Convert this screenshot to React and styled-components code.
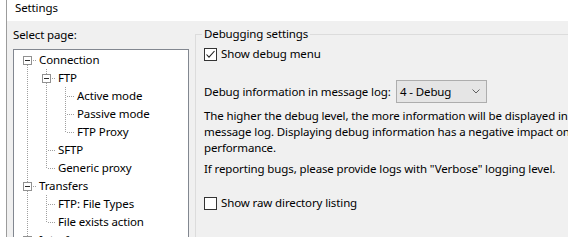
import React from 'react';
import styled, { createGlobalStyle } from 'styled-components';

const Global = createGlobalStyle`
  html, body { margin: 0; padding: 0; background: #ffffff; }
  body {
    font-family: "Noto Sans", "Liberation Sans", sans-serif;
    font-size: 11.5px;
    letter-spacing: -0.12px;
    color: #000000;
    overflow: hidden;
  }
`;

const Desktop = styled.div`
  width: 568px;
  height: 237px;
  box-sizing: border-box;
  padding-left: 6px;
  background: #ffffff;
  overflow: hidden;
`;

const Window = styled.div`
  height: 100%;
  display: flex;
  flex-direction: column;
  border-left: 1px solid #9c9c9c;
  background: #f0f0f0;
  overflow: hidden;
`;

const TitleBar = styled.div`
  flex: none;
  height: 21px;
  box-sizing: border-box;
  padding-left: 8px;
  background: #ffffff;
  line-height: 15px;
  white-space: nowrap;
`;

const Body = styled.div`
  flex: 1;
  min-height: 0;
  display: flex;
  padding-left: 6px;
  overflow: hidden;
`;

const LeftColumn = styled.div`
  flex: none;
  width: 176px;
  display: flex;
  flex-direction: column;
`;

const PageLabel = styled.div`
  padding-top: 6px;
  margin-bottom: 6px;
  line-height: 16px;
`;

const TreeBox = styled.div`
  flex: 1;
  margin-bottom: -30px;
  border: 1px solid #828790;
  background: #ffffff;
  padding: 1px 0 0 4px;
  overflow: hidden;
`;

const TreeRow = styled.div`
  display: flex;
  align-items: center;
  height: 18px;
`;

const TreeText = styled.span`
  margin-left: 2px;
  line-height: 18px;
  white-space: nowrap;
`;

const GroupBox = styled.div`
  position: relative;
  flex: 1;
  margin: 13px -30px -30px 6px;
  border: 1px solid #dcdcdc;
  padding: 11px 0 0 8px;
`;

const Legend = styled.div`
  position: absolute;
  top: -9px;
  left: 6px;
  padding: 0 2px;
  line-height: 16px;
  background: #f0f0f0;
  white-space: nowrap;
`;

const CheckRow = styled.label`
  display: flex;
  align-items: center;
  gap: 4px;
  height: 16px;
  margin-top: ${p => p.$top || 0}px;
  line-height: 16px;
  white-space: nowrap;
`;

const DebugRow = styled.div`
  display: flex;
  align-items: center;
  height: 23px;
  margin-top: 18px;
`;

const DebugLabel = styled.span`
  flex: none;
  width: 192px;
  white-space: nowrap;
`;

const Select = styled.div`
  flex: none;
  width: 91px;
  height: 23px;
  box-sizing: border-box;
  display: flex;
  align-items: center;
  justify-content: space-between;
  padding: 0 6px 0 3px;
  border: 1px solid #adadad;
  background: #e5e5e5;
  white-space: nowrap;
`;

const Para = styled.p`
  margin: 5px 0 0 0;
  line-height: 16px;
  white-space: nowrap;
`;

const DOT = '#a0a0a0';

function Guide({ on }) {
  return (
    <svg width="19" height="18" style={{ flex: 'none', display: 'block' }} shapeRendering="crispEdges">
      {on && <line x1="9.5" y1="0" x2="9.5" y2="18" stroke={DOT} strokeDasharray="1 1" />}
    </svg>
  );
}

function Connector({ top, bottom, box }) {
  return (
    <svg width="19" height="18" style={{ flex: 'none', display: 'block' }} shapeRendering="crispEdges">
      {top && <line x1="9.5" y1="0" x2="9.5" y2="9" stroke={DOT} strokeDasharray="1 1" />}
      {bottom && <line x1="9.5" y1="10" x2="9.5" y2="18" stroke={DOT} strokeDasharray="1 1" />}
      <line x1={box ? 15 : 11} y1="9.5" x2="19" y2="9.5" stroke={DOT} strokeDasharray="1 1" />
      {box && (
        <g>
          <rect x="5.5" y="5.5" width="8" height="8" fill="#ffffff" stroke="#919191" />
          <line x1="7" y1="9.5" x2="12" y2="9.5" stroke="#2a2a2a" />
        </g>
      )}
    </svg>
  );
}

const tree = [
  { text: 'Connection', guides: [], top: false, bottom: true, box: true },
  { text: 'FTP', guides: [true], top: true, bottom: true, box: true },
  { text: 'Active mode', guides: [true, true], top: true, bottom: true },
  { text: 'Passive mode', guides: [true, true], top: true, bottom: true },
  { text: 'FTP Proxy', guides: [true, true], top: true, bottom: false },
  { text: 'SFTP', guides: [true], top: true, bottom: true },
  { text: 'Generic proxy', guides: [true], top: true, bottom: false },
  { text: 'Transfers', guides: [], top: true, bottom: true, box: true },
  { text: 'FTP: File Types', guides: [true], top: true, bottom: true },
  { text: 'File exists action', guides: [true], top: true, bottom: false },
  { text: 'Interface', guides: [], top: true, bottom: true, box: true },
];

function CheckBox({ checked }) {
  return (
    <svg width="13" height="13" style={{ flex: 'none', display: 'block' }}>
      <rect x="0.5" y="0.5" width="12" height="12" fill="#ffffff" stroke="#333333" />
      {checked && (
        <polyline points="2.5,6.5 5,9.2 10.5,3" fill="none" stroke="#222222" strokeWidth="1.1" />
      )}
    </svg>
  );
}

function Chevron() {
  return (
    <svg width="8" height="5" style={{ display: 'block' }}>
      <polyline points="0.5,0.5 4,4 7.5,0.5" fill="none" stroke="#606060" strokeWidth="1" />
    </svg>
  );
}

export default function App() {
  return (
    <>
      <Global />
      <Desktop>
        <Window>
          <TitleBar>Settings</TitleBar>
          <Body>
            <LeftColumn>
              <PageLabel>Select page:</PageLabel>
              <TreeBox>
                {tree.map((n, i) => (
                  <TreeRow key={i}>
                    {n.guides.map((g, j) => (
                      <Guide key={j} on={g} />
                    ))}
                    <Connector top={n.top} bottom={n.bottom} box={n.box} />
                    <TreeText>{n.text}</TreeText>
                  </TreeRow>
                ))}
              </TreeBox>
            </LeftColumn>
            <GroupBox>
              <Legend>Debugging settings</Legend>
              <CheckRow>
                <CheckBox checked />
                Show debug menu
              </CheckRow>
              <DebugRow>
                <DebugLabel>Debug information in message log:</DebugLabel>
                <Select>
                  <span>4 - Debug</span>
                  <Chevron />
                </Select>
              </DebugRow>
              <Para>
                The higher the debug level, the more information will be displayed in
                <br />
                message log. Displaying debug information has a negative impact on
                <br />
                performance.
              </Para>
              <Para>If reporting bugs, please provide logs with "Verbose" logging level.</Para>
              <CheckRow $top={18}>
                <CheckBox />
                Show raw directory listing
              </CheckRow>
            </GroupBox>
          </Body>
        </Window>
      </Desktop>
    </>
  );
}
